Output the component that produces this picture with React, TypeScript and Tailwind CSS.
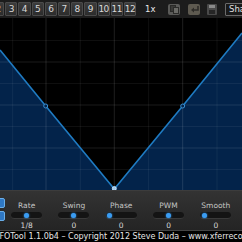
import React from "react";

const steps = ["2", "3", "4", "5", "6", "7", "8", "9", "10", "11", "12"];

const knobs = [
  { label: "Rate", value: "1/8", pos: 50 },
  { label: "Swing", value: "0", pos: 50 },
  { label: "Phase", value: "0", pos: 12 },
  { label: "PWM", value: "0", pos: 50 },
  { label: "Smooth", value: "0", pos: 12 },
];

function Graph() {
  const w = 242;
  const h = 172;
  const vx = [12.7, 46, 80.3, 114.3, 148.6, 182.7, 217];
  const hy = [22.5, 44, 65.5, 87, 108.5, 130, 151.5];
  const major = (i: number) => i % 2 === 1;
  // waveform points (graph coordinates, top = y 18 of page)
  const pts = [
    [0, 32],
    [45.7, 88],
    [114.3, 171],
    [182.7, 88],
    [242, 15],
  ];
  const line = pts.map((p) => p.join(",")).join(" ");
  const fill = `0,${h} ${line} ${w},${h}`;
  return (
    <svg width={w} height={h} className="block shrink-0">
      <rect width={w} height={h} fill="#000" />
      <polygon points={fill} fill="#03234a" />
      {vx.map((x, i) => (
        <line key={"v" + i} x1={x} x2={x} y1={0} y2={h} stroke="#ffffff" strokeOpacity={major(i) ? 0.12 : 0.06} strokeWidth={1} />
      ))}
      {hy.map((y, i) => (
        <line key={"h" + i} x1={0} x2={w} y1={y} y2={y} stroke="#ffffff" strokeOpacity={major(i) ? 0.1 : 0.06} strokeWidth={1} />
      ))}
      <polyline points={line} fill="none" stroke="#1f7bc2" strokeWidth={1.6} strokeLinejoin="round" />
      <circle cx={45.7} cy={88} r={2} fill="#03234a" stroke="#3a8fd0" strokeWidth={1} />
      <circle cx={182.7} cy={88} r={2} fill="#03234a" stroke="#3a8fd0" strokeWidth={1} />
      <circle cx={114.3} cy={170.5} r={2} fill="#9ec8ea" stroke="#d8ecff" strokeWidth={0.8} />
    </svg>
  );
}

function CopyIcon() {
  return (
    <div className="w-[12px] h-[11px] rounded-[2px] bg-[#5a5a58] flex items-center justify-center">
      <svg width="9" height="9" viewBox="0 0 9 9">
        <rect x="0.5" y="0.5" width="5" height="6" fill="#3a3a38" stroke="#2a2a28" strokeWidth="1" />
        <rect x="3.5" y="2.5" width="5" height="6" fill="#6a6a66" stroke="#2a2a28" strokeWidth="1" />
      </svg>
    </div>
  );
}

function PasteIcon() {
  return (
    <div className="w-[12px] h-[11px] rounded-[2px] bg-[#5e5a50] flex items-center justify-center">
      <svg width="9" height="9" viewBox="0 0 9 9">
        <path d="M8 1 L8 5 L3 5" fill="none" stroke="#2e2c28" strokeWidth="1.6" />
        <path d="M1 5 L4 2.5 L4 7.5 Z" fill="#2e2c28" />
      </svg>
    </div>
  );
}

function SaveIcon() {
  return (
    <div className="w-[10px] h-[11px] flex items-center justify-center">
      <svg width="10" height="11" viewBox="0 0 10 11">
        <rect x="0" y="0" width="10" height="11" rx="1" fill="#4a4a4a" />
        <rect x="2" y="1" width="6" height="3" fill="#8a8a8a" />
        <rect x="2" y="6" width="6" height="4" fill="#262626" />
      </svg>
    </div>
  );
}

export default function App() {
  return (
    <div className="w-[242px] h-[242px] bg-black overflow-hidden flex flex-col font-['DejaVu_Sans',sans-serif]">
      {/* top bar */}
      <div className="h-[18px] shrink-0 bg-[#1c1c1c] flex items-center overflow-hidden">
        <div className="flex items-center gap-px -ml-[8px] shrink-0">
          {steps.map((s) => (
            <div
              key={s}
              className="w-[12.2px] h-[14px] shrink-0 flex items-center justify-center rounded-[1px] border border-[#4a4a4a] bg-gradient-to-b from-[#3c3c3c] to-[#2c2c2c] text-[9px] leading-none text-[#d8d8d8] tracking-[-0.5px]"
            >
              {s}
            </div>
          ))}
        </div>
        <div className="ml-[9px] w-[12px] text-[8.5px] leading-none text-[#e8e8e8] shrink-0">1x</div>
        <div className="ml-[11px] shrink-0">
          <CopyIcon />
        </div>
        <div className="ml-[8px] shrink-0">
          <PasteIcon />
        </div>
        <div className="ml-[7px] shrink-0">
          <SaveIcon />
        </div>
        <div className="ml-[8px] h-[13px] pl-[3px] pr-2 shrink-0 flex items-center border border-[#6a6a6a] rounded-[1px] bg-[#1a1a1a] text-[8.5px] leading-none text-[#e0e0e0]">
          Shape
        </div>
      </div>

      <Graph />

      {/* control panel */}
      <div className="h-[40px] shrink-0 flex bg-gradient-to-b from-[#333333] to-[#242424] border-t border-[#3c3c3c]">
        <div className="w-[3px] shrink-0 flex flex-col gap-[3px] pt-[7px] overflow-visible">
          <div className="w-[10px] h-[10px] -ml-[5px] rounded-[2px] bg-[#2f78c4] border border-[#6aaee8]" />
          <div className="w-[10px] h-[10px] -ml-[5px] rounded-[2px] bg-[#2f78c4] border border-[#6aaee8]" />
        </div>
        {knobs.map((k) => (
          <div key={k.label} className="w-[47.3px] shrink-0 flex flex-col items-center pt-[10px]">
            <div className="text-[7.5px] leading-[9px] text-[#c4c4c4]">{k.label}</div>
            <div className="mt-[2px] relative w-[31px] h-[7px] rounded-full bg-[#141414] border-b border-[#3a3a3a]">
              <div
                className="absolute top-[1px] w-[5px] h-[5px] rounded-full bg-[#3a9cf2] shadow-[0_0_2px_#3a9cf2]"
                style={{ left: `calc(${k.pos}% - 2.5px)` }}
              />
            </div>
            <div className="mt-[2px] text-[7.5px] leading-[9px] text-[#d8d8d8]">{k.value}</div>
          </div>
        ))}
      </div>

      {/* footer */}
      <div className="h-[12px] shrink-0 bg-black border-t border-[#444] flex items-center overflow-hidden">
        <div className="-ml-[5px] whitespace-nowrap text-[8px] leading-none text-[#e4e4e4]">
          LFOTool 1.1.0b4 – Copyright 2012 Steve Duda – www.xferrecords.com
        </div>
      </div>
    </div>
  );
}
